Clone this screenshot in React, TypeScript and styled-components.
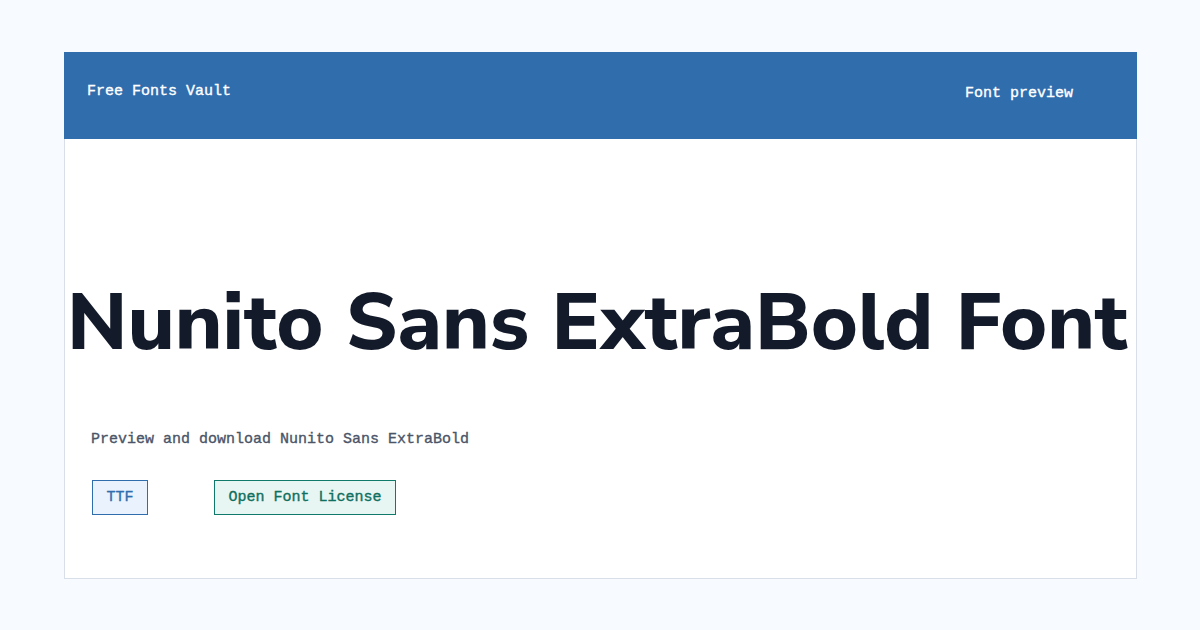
import React from "react";
import styled, { createGlobalStyle } from "styled-components";

const GlobalStyle = createGlobalStyle`
  html, body {
    margin: 0;
    padding: 0;
    background: #f7fafe;
  }
  body {
    font-family: "Liberation Mono", "DejaVu Sans Mono", monospace;
    -webkit-text-stroke: 0.35px currentColor;
  }
`;

const Page = styled.div`
  width: 1200px;
  height: 630px;
  padding: 52px 63px 0 64px;
  box-sizing: border-box;
`;

const Card = styled.div`
  height: 527px;
  background: #ffffff;
  border: 1px solid #d8dfe9;
  border-top: none;
  box-sizing: border-box;
  display: flex;
  flex-direction: column;
`;

const Header = styled.header`
  height: 87px;
  margin: 0 -1px;
  background: #2f6dad;
  display: flex;
  align-items: center;
  justify-content: space-between;
  padding: 0 64px 0 23px;
`;

const Brand = styled.div`
  color: #ffffff;
  font-size: 15px;
  margin-bottom: 8px;
`;

const NavLink = styled.div`
  color: #ffffff;
  font-size: 15px;
  margin-bottom: 4px;
`;

const Body = styled.main`
  flex: 1;
  display: flex;
  flex-direction: column;
  padding: 0 27px;
`;

const Title = styled.h1`
  margin: 144px -27px 0;
  padding-left: 2px;
  font-family: "Nunito Sans", Inter, "Open Sans", sans-serif;
  font-weight: 800;
  font-size: 80.3px;
  line-height: 80px;
  color: #131a2a;
  white-space: nowrap;
  -webkit-text-stroke: 0;
`;

const Subtitle = styled.p`
  margin: 68px 0 0 -1px;
  font-size: 15px;
  line-height: 18px;
  color: #4a5568;
`;

const Badges = styled.div`
  margin-top: 31px;
  display: flex;
  gap: 66px;
`;

const Badge = styled.span<{ tone: "blue" | "green" }>`
  display: inline-block;
  padding: 8px 13.5px;
  font-size: 15px;
  line-height: 17px;
  border: 1px solid ${p => (p.tone === "blue" ? "#2f6dad" : "#0f7a6a")};
  background: ${p => (p.tone === "blue" ? "#eaf3fd" : "#e7f6f2")};
  color: ${p => (p.tone === "blue" ? "#2f6dad" : "#0f6f60")};
`;

export default function App() {
  return (
    <>
      <GlobalStyle />
      <Page>
        <Card>
          <Header>
            <Brand>Free Fonts Vault</Brand>
            <NavLink>Font preview</NavLink>
          </Header>
          <Body>
            <Title>Nunito Sans ExtraBold Font</Title>
            <Subtitle>Preview and download Nunito Sans ExtraBold</Subtitle>
            <Badges>
              <Badge tone="blue">TTF</Badge>
              <Badge tone="green">Open Font License</Badge>
            </Badges>
          </Body>
        </Card>
      </Page>
    </>
  );
}
